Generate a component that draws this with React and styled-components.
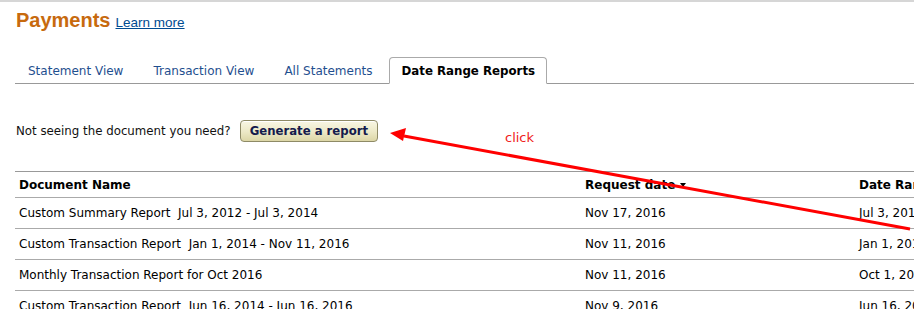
import React from 'react'
import styled, { createGlobalStyle } from 'styled-components';

const GlobalStyle = createGlobalStyle`
  html, body {
    margin: 0;
    padding: 0;
    background: #fff;
    overflow: hidden;
  }
  body {
    font-family: Verdana, "DejaVu Sans", sans-serif;
    color: #000;
  }
`;

const tabs = ['Statement View', 'Transaction View', 'All Statements', 'Date Range Reports'];

const rows = [
  { name: 'Custom Summary Report  Jul 3, 2012 - Jul 3, 2014', requested: 'Nov 17, 2016', range: 'Jul 3, 2012 - Jul 3, 2014' },
  { name: 'Custom Transaction Report  Jan 1, 2014 - Nov 11, 2016', requested: 'Nov 11, 2016', range: 'Jan 1, 2014 - Nov 11, 2016' },
  { name: 'Monthly Transaction Report for Oct 2016', requested: 'Nov 11, 2016', range: 'Oct 1, 2016 - Oct 31, 2016' },
  { name: 'Custom Transaction Report  Jun 16, 2014 - Jun 16, 2016', requested: 'Nov 9, 2016', range: 'Jun 16, 2014 - Jun 16, 2016' },
];

const App = () => {
  return (
    <Page>
      <GlobalStyle />
      <Header>
        <Title>Payments</Title>
        <LearnMore href="#">Learn more</LearnMore>
      </Header>

      <TabBar>
        {tabs.map((t, i) => (
          <Tab key={t} active={i === 3}>{t}</Tab>
        ))}
      </TabBar>

      <Prompt>
        <span>Not seeing the document you need?</span>
        <GenerateButton>Generate a report</GenerateButton>
      </Prompt>

      <Table>
        <thead>
          <tr>
            <Th>Document Name</Th>
            <Th>Request date <Caret /></Th>
            <Th>Date Range</Th>
          </tr>
        </thead>
        <tbody>
          {rows.map((r) => (
            <tr key={r.name}>
              <Td>{r.name}</Td>
              <Td>{r.requested}</Td>
              <Td>{r.range}</Td>
            </tr>
          ))}
        </tbody>
      </Table>

      {/* red annotation drawn over the screenshot */}
      <Annotation width="914" height="309" viewBox="0 0 914 309">
        <line x1="404" y1="136" x2="910" y2="229" stroke="#ff0000" strokeWidth="3" />
        <polygon points="390,133 406,128 403,141" fill="#ff0000" />
      </Annotation>
      <ClickLabel>click</ClickLabel>
    </Page>
  )
}

const Page = styled.div`
  position: relative;
  width: 914px;
  height: 309px;
  overflow: hidden;
  border-top: 2px solid #d6d6d6;
  box-sizing: border-box;
`;

const Header = styled.div`
  display: flex;
  align-items: baseline;
  gap: 5px;
  padding: 7px 16px 0;
  height: 34px;
`;

const Title = styled.h1`
  margin: 0;
  font-family: "Liberation Sans", Arial, sans-serif;
  font-size: 20px;
  font-weight: bold;
  color: #c76a0e;
`;

const LearnMore = styled.a`
  font-family: "Liberation Sans", Arial, sans-serif;
  font-size: 13.5px;
  color: #004b91;
  text-decoration: underline;
`;

const TabBar = styled.div`
  display: flex;
  align-items: flex-end;
  gap: 4px;
  margin: 14px 0 0 15px;
  height: 26px;
  border-bottom: 1px solid #999;
`;

const Tab = styled.div`
  box-sizing: border-box;
  height: ${(p) => (p.active ? '27px' : '26px')};
  margin-bottom: ${(p) => (p.active ? '-1px' : '0')};
  padding: ${(p) => (p.active ? '0 11px' : '0 12px')};
  display: flex;
  align-items: center;
  font-size: ${(p) => (p.active ? '11.8px' : '12px')};
  font-weight: ${(p) => (p.active ? 'bold' : 'normal')};
  color: ${(p) => (p.active ? '#000' : '#1f4f8f')};
  background: #fff;
  border: ${(p) => (p.active ? '1px solid #aaa' : '1px solid transparent')};
  border-bottom: ${(p) => (p.active ? '1px solid #fff' : 'none')};
  border-radius: 4px 4px 0 0;
`;

const Prompt = styled.div`
  display: flex;
  align-items: center;
  gap: 9px;
  margin: 36px 0 0 16px;
  font-size: 11.8px;
  color: #111;
`;

const GenerateButton = styled.button`
  height: 22px;
  padding: 0 9px;
  font-family: Verdana, "DejaVu Sans", sans-serif;
  font-size: 11.7px;
  font-weight: bold;
  color: #141a4c;
  background: linear-gradient(to bottom, #f8f6e4 0%, #ece8c6 55%, #dcd6a6 100%);
  border: 1px solid #8e8a66;
  border-radius: 4px;
  box-shadow: inset 0 1px 0 #fff;
`;

const Table = styled.table`
  margin: 29px 0 0 15px;
  width: 1100px;
  border-collapse: collapse;
  font-size: 12px;
  table-layout: fixed;

  th:nth-child(1) { width: 558px; }
  th:nth-child(2) { width: 266px; }
`;

const Th = styled.th`
  height: 25px;
  padding: 0 4px;
  text-align: left;
  font-weight: bold;
  border-top: 1px solid #999;
  border-bottom: 1px solid #aaa;
  white-space: nowrap;
`;

const Td = styled.td`
  height: 30px;
  padding: 0 4px;
  text-align: left;
  border-bottom: 1px solid #aaa;
  white-space: pre;
`;

const Caret = styled.span`
  display: inline-block;
  width: 0;
  height: 0;
  margin-left: 1px;
  vertical-align: middle;
  border-left: 3px solid transparent;
  border-right: 3px solid transparent;
  border-top: 4px solid #000;
`;

const Annotation = styled.svg`
  position: absolute;
  top: -2px;
  left: 0;
  pointer-events: none;
`;

const ClickLabel = styled.span`
  position: absolute;
  left: 505px;
  top: 128px;
  font-family: "DejaVu Sans", sans-serif;
  font-size: 13px;
  color: #f02020;
`;

export default App
